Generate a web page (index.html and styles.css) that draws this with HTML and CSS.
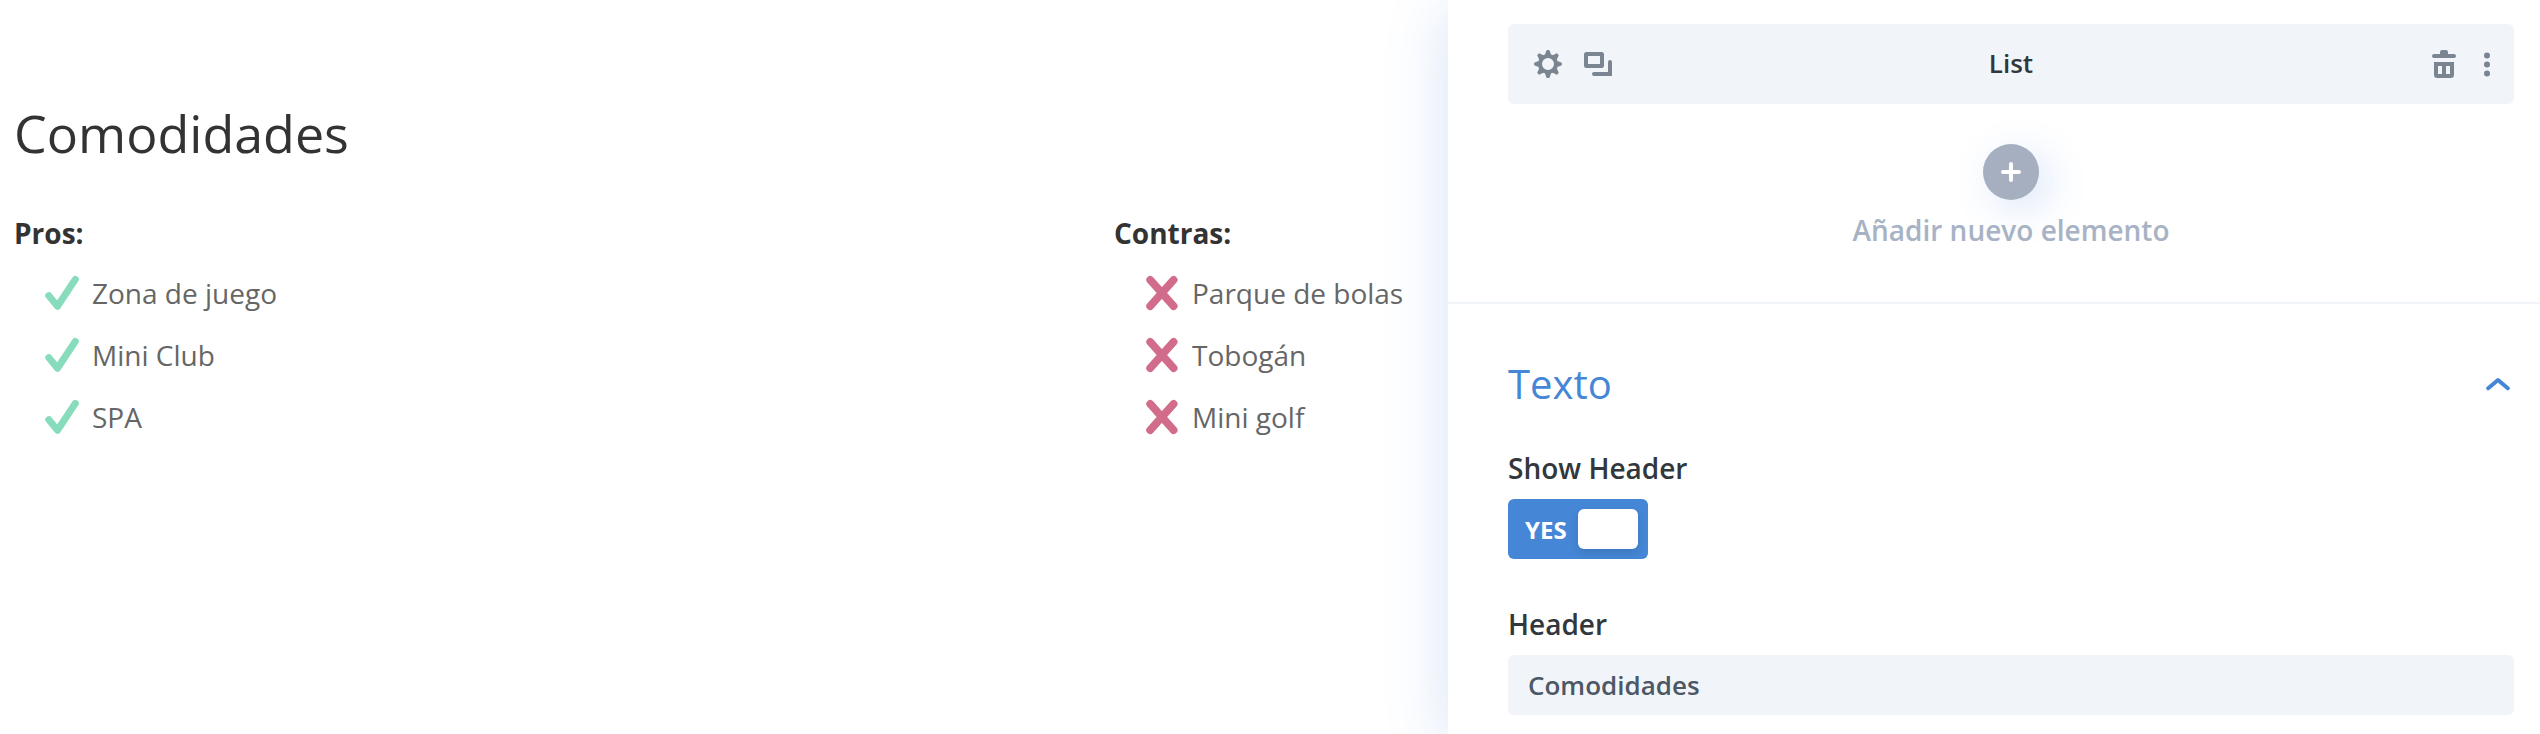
FILE: index.html
```html
<!DOCTYPE html>
<html lang="es">
<head>
<meta charset="utf-8">
<title>Comodidades</title>
<link rel="stylesheet" href="styles.css">
</head>
<body>
<svg class="symbols" width="0" height="0">
  <symbol id="check" viewBox="0 0 36 36"><path d="M4.8 20.6 L13.5 31.2 L31.3 4.4" fill="none" stroke="#87dcbb" stroke-width="7" stroke-linecap="round" stroke-linejoin="round"/></symbol>
  <symbol id="cross" viewBox="0 0 36 36"><path d="M6.2 4.8 L29.6 31.2 M29.6 4.8 L6.2 31.2" fill="none" stroke="#d16d8a" stroke-width="7.8" stroke-linecap="round"/></symbol>
</svg>
<div class="app">
  <main class="preview">
    <h1 class="title">Comodidades</h1>
    <div class="columns">
      <section class="column">
        <h2 class="column-title">Pros:</h2>
        <ul class="items">
          <li class="item"><svg class="mark"><use href="#check"/></svg>Zona de juego</li>
          <li class="item"><svg class="mark"><use href="#check"/></svg>Mini Club</li>
          <li class="item"><svg class="mark"><use href="#check"/></svg>SPA</li>
        </ul>
      </section>
      <section class="column">
        <h2 class="column-title">Contras:</h2>
        <ul class="items">
          <li class="item"><svg class="mark"><use href="#cross"/></svg>Parque de bolas</li>
          <li class="item"><svg class="mark"><use href="#cross"/></svg>Tobogán</li>
          <li class="item"><svg class="mark"><use href="#cross"/></svg>Mini golf</li>
        </ul>
      </section>
    </div>
  </main>
  <aside class="panel">
    <div class="module">
      <div class="element">
        <div class="tools">
          <svg width="28" height="28" viewBox="0 0 28 28">
            <circle cx="14" cy="14" r="8" fill="none" stroke="#7a8591" stroke-width="4"/>
            <g fill="#7a8591" stroke="#7a8591" stroke-width="1.6" stroke-linejoin="round">
              <path id="tooth" d="M11.4 5.8 L13.2 .9 H14.8 L16.6 5.8Z"/>
              <use href="#tooth" transform="rotate(45 14 14)"/>
              <use href="#tooth" transform="rotate(90 14 14)"/>
              <use href="#tooth" transform="rotate(135 14 14)"/>
              <use href="#tooth" transform="rotate(180 14 14)"/>
              <use href="#tooth" transform="rotate(225 14 14)"/>
              <use href="#tooth" transform="rotate(270 14 14)"/>
              <use href="#tooth" transform="rotate(315 14 14)"/>
            </g>
          </svg>
          <svg width="28" height="28" viewBox="0 0 28 28" fill="none" stroke="#7a8591" stroke-width="4">
            <rect x="2" y="4" width="16" height="12" rx=".5"/>
            <path d="M26 12 V24 H10" stroke-linecap="round"/>
          </svg>
        </div>
        <span class="element-name">List</span>
        <div class="tools tools-end">
          <svg width="24" height="28" viewBox="0 0 24 28" fill="#7a8591">
            <path d="M8 4 V2 Q8 0 10 0 H14 Q16 0 16 2 V4 H22 A2 2 0 0 1 22 8 H2 A2 2 0 0 1 2 4Z"/>
            <path fill-rule="evenodd" d="M2 12 H22 V25 Q22 28 19 28 H5 Q2 28 2 25Z M6 16 V24 H10 V16Z M14 16 V24 H18 V16Z"/>
          </svg>
          <svg width="6" height="28" viewBox="0 0 6 28" fill="#7a8591"><circle cx="3" cy="5.5" r="3"/><circle cx="3" cy="14.5" r="3"/><circle cx="3" cy="23.5" r="3"/></svg>
        </div>
      </div>
      <button class="add">
        <span class="add-circle"><svg width="20" height="20" viewBox="0 0 20 20"><path d="M10 2 V18 M2 10 H18" stroke="#fff" stroke-width="4" stroke-linecap="round"/></svg></span>
        <span class="add-label">Añadir nuevo elemento</span>
      </button>
    </div>
    <div class="group">
      <div class="group-head">
        <span>Texto</span>
        <svg width="24" height="14" viewBox="0 0 24 14"><path d="M2.2 11.2 L12 3 L21.8 11.2" fill="none" stroke="#4587d6" stroke-width="4" stroke-linecap="round" stroke-linejoin="round"/></svg>
      </div>
      <div class="field">
        <div class="label">Show Header</div>
        <div class="toggle"><span>YES</span><i class="knob"></i></div>
      </div>
      <div class="field">
        <div class="label">Header</div>
        <div class="input">Comodidades</div>
      </div>
    </div>
  </aside>
</div>
</body>
</html>
```
FILE: styles.css
```css
* { box-sizing: border-box; }
body { margin: 0; background: #fff; font-family: "Open Sans", sans-serif; }
.symbols { display: block; }
.app { display: flex; width: 2540px; height: 734px; overflow: hidden; }

.preview { width: 1448px; padding: 103px 0 0 14px; color: #666; }
.title { margin: 0 0 50px; font-size: 52px; line-height: 60px; font-weight: 400; color: #333; }
.columns { display: grid; grid-template-columns: 1100px 1fr; }
.column-title { margin: 0; font-size: 28px; line-height: 40px; font-weight: 700; color: #333; }
.items { list-style: none; margin: 0; padding: 9px 0 0 30px; }
.item { display: flex; gap: 12px; font-size: 28px; line-height: 62px; white-space: nowrap; }
.mark { width: 36px; height: 36px; margin-top: 13px; }

.panel { position: relative; width: 1092px; background: #fff; box-shadow: 0 10px 60px rgba(50, 115, 220, .2); }
.module { height: 304px; padding: 24px 26px 0 60px; border-bottom: 2px solid #f1f5f9; }
.element { display: grid; grid-template-columns: 1fr auto 1fr; align-items: center; height: 80px; padding: 0 24px 0 26px; border-radius: 6px; background: #f1f5fa; }
.element-name { padding: 0 2px 2px 0; font-size: 26px; line-height: 36px; font-weight: 600; color: #32373c; }
.tools { display: flex; align-items: center; gap: 22px; }
.tools-end { justify-content: flex-end; gap: 28px; }
.add { display: flex; flex-direction: column; align-items: center; gap: 10px; width: 100%; margin: 40px 0 0; padding: 0; border: 0; background: none; font-family: inherit; }
.add-circle { display: grid; place-items: center; width: 56px; height: 56px; border-radius: 50%; background: #a5afc0; box-shadow: 10px 10px 40px rgba(50, 115, 220, .18); }
.add-label { font-size: 28px; line-height: 40px; font-weight: 600; color: #a7b3c4; }

.group { padding: 52px 26px 0 60px; }
.group-head { display: flex; justify-content: space-between; align-items: center; height: 56px; padding-right: 4px; margin-bottom: 35px; font-size: 40px; line-height: 56px; color: #4587d6; }
.field { margin-bottom: 44px; }
.label { margin-bottom: 11px; padding-top: 1px; font-size: 28px; line-height: 40px; font-weight: 600; color: #32373c; }
.toggle { display: flex; align-items: center; justify-content: space-between; width: 140px; height: 60px; padding: 0 10px 0 17px; border-radius: 6px; background: #4587d6; font-size: 24px; line-height: 41px; font-weight: 700; color: #fff; }
.knob { width: 60px; height: 40px; border-radius: 6px; background: #fff; box-shadow: 0 4px 10px rgba(0, 0, 0, .12); }
.input { height: 60px; padding-left: 20px; border-radius: 6px; background: #f1f5fa; font-size: 26px; line-height: 60px; font-weight: 600; color: #4c5866; }
```
